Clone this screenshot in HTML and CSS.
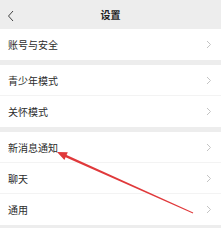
FILE: index.html
```html
<!DOCTYPE html>
<html lang="zh">
<head>
<meta charset="utf-8">
<link rel="stylesheet" href="styles.css">
</head>
<body>
<div class="page">
  <header class="topbar">
    <svg class="back" width="8" height="12" viewBox="0 0 8 12"><path d="M6 1 L1.5 6 L6 11" fill="none" stroke="#444" stroke-width="1"/></svg>
    <span class="title">设置</span>
  </header>
  <section class="group">
    <div class="row"><span>账号与安全</span><svg class="chev" width="6" height="9" viewBox="0 0 6 9"><path d="M1 1 L4.5 4.5 L1 8" fill="none" stroke="#c4c4c4" stroke-width="1"/></svg></div>
  </section>
  <section class="group">
    <div class="row"><span>青少年模式</span><svg class="chev" width="6" height="9" viewBox="0 0 6 9"><path d="M1 1 L4.5 4.5 L1 8" fill="none" stroke="#c4c4c4" stroke-width="1"/></svg></div>
    <div class="row"><span>关怀模式</span><svg class="chev" width="6" height="9" viewBox="0 0 6 9"><path d="M1 1 L4.5 4.5 L1 8" fill="none" stroke="#c4c4c4" stroke-width="1"/></svg></div>
  </section>
  <section class="group">
    <div class="row"><span>新消息通知</span><svg class="chev" width="6" height="9" viewBox="0 0 6 9"><path d="M1 1 L4.5 4.5 L1 8" fill="none" stroke="#c4c4c4" stroke-width="1"/></svg></div>
    <div class="row"><span>聊天</span><svg class="chev" width="6" height="9" viewBox="0 0 6 9"><path d="M1 1 L4.5 4.5 L1 8" fill="none" stroke="#c4c4c4" stroke-width="1"/></svg></div>
    <div class="row"><span>通用</span><svg class="chev" width="6" height="9" viewBox="0 0 6 9"><path d="M1 1 L4.5 4.5 L1 8" fill="none" stroke="#c4c4c4" stroke-width="1"/></svg></div>
  </section>
  <svg class="arrow" width="221" height="228" viewBox="0 0 221 228">
    <polygon points="57,152 67.8,152.3 66.6,155 193.2,212.6 192.9,213.4 65.6,157.2 64.4,160" fill="#e0393b"/>
  </svg>
</div>
</body>
</html>
```

FILE: styles.css
```css
html, body {
  margin: 0;
  padding: 0;
  background: #ededed;
}
.page {
  position: relative;
  width: 221px;
  height: 228px;
  overflow: hidden;
  display: flex;
  flex-direction: column;
  gap: 5px;
  font-family: "Noto Sans CJK SC", "Noto Sans", sans-serif;
  color: #2b2b2b;
}
.topbar {
  position: relative;
  height: 29px;
  margin-bottom: -5px;
  display: flex;
  align-items: center;
  justify-content: center;
  background: #ededed;
}
.back {
  position: absolute;
  left: 7px;
  top: 10px;
}
.title {
  font-size: 10px;
  font-weight: 700;
  color: #222;
}
.group {
  background: #fff;
  display: flex;
  flex-direction: column;
}
.row {
  height: 31px;
  display: flex;
  align-items: center;
  justify-content: space-between;
  padding: 0 9px 0 8px;
  font-size: 10px;
  line-height: 1;
  box-shadow: inset 0 -1px 0 #f3f3f3;
}
.row:last-child {
  box-shadow: none;
}
.row span {
  padding-top: 1px;
}
.arrow {
  position: absolute;
  left: 0;
  top: 0;
}
```
